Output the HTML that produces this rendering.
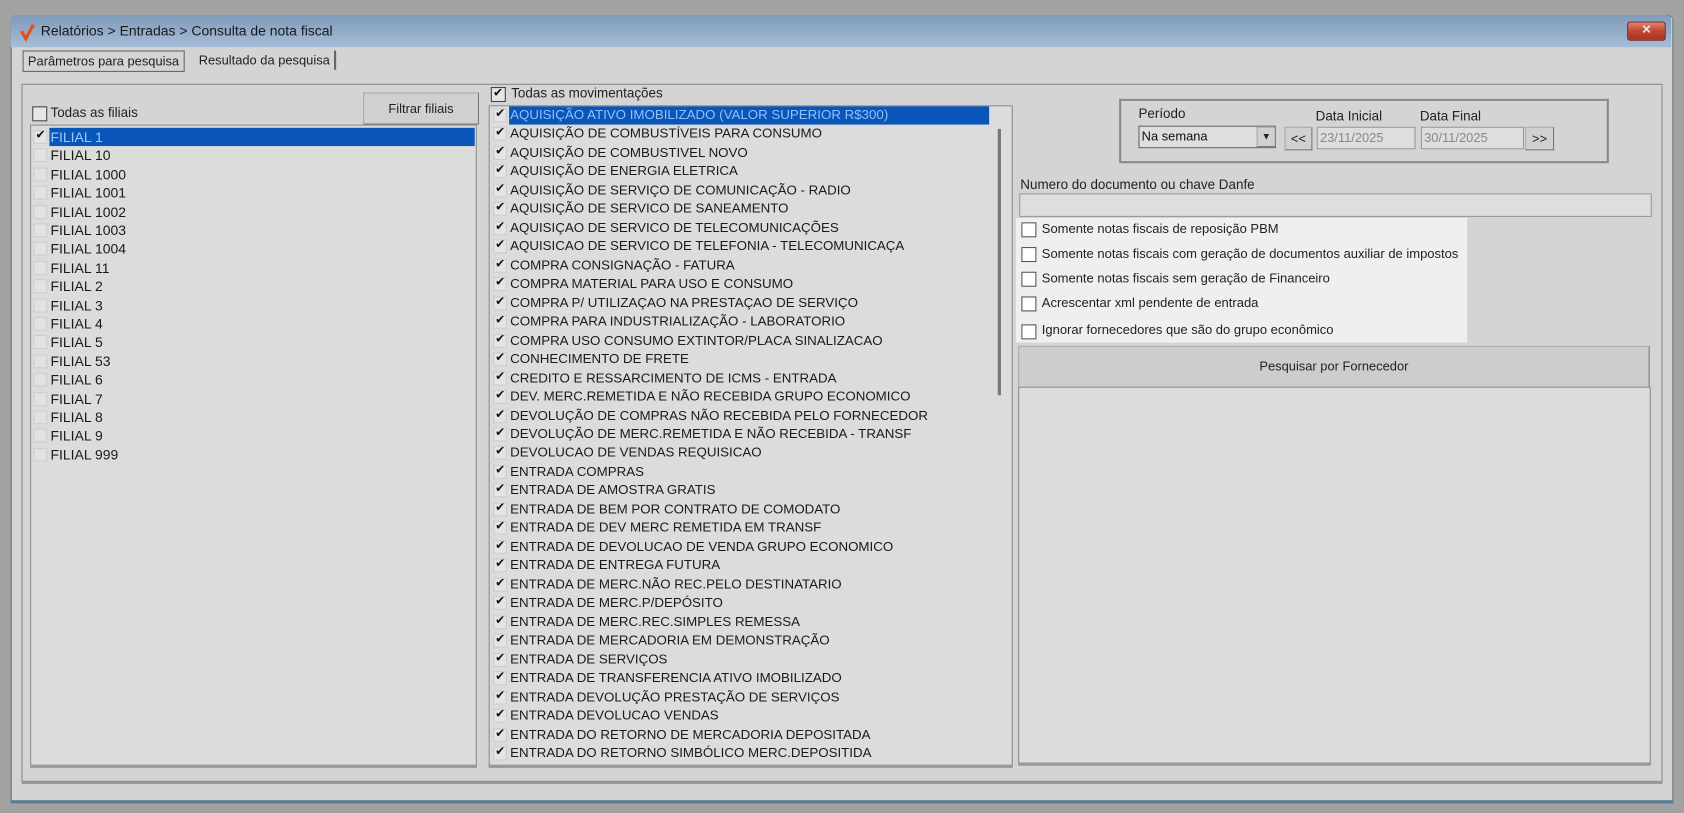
<!DOCTYPE html>
<html><head><meta charset="utf-8"><style>
html,body{margin:0;padding:0;width:1684px;height:813px;overflow:hidden;background:#a2a2a2;}
#s{position:absolute;left:0;top:0;width:1568px;height:757px;transform:scale(1.074,1.074);transform-origin:0 0;font-family:"Liberation Sans",sans-serif;color:#222;}
.a{position:absolute;}
.win{left:10px;top:14px;width:1546px;height:730px;background:#d4d4d4;border:1px solid #6d7f8f;border-radius:5px 5px 0 0;box-shadow:0 2px 0 #4a7f9a;}
.title{left:10px;top:14px;width:1546px;height:30px;background:linear-gradient(#7f9bbb,#a6bdd6);border-radius:5px 5px 0 0;}
.ttl{left:38px;top:21px;font-size:13px;color:#1a1a1a;}
.close{left:1515px;top:20px;width:34px;height:16px;background:linear-gradient(#e08570,#c4452f 50%,#a83220);border:1px solid #7a2a20;border-radius:3px;color:#e8e8e8;font-size:11px;text-align:center;line-height:15px;font-weight:bold;}
.tab{font-size:12px;height:18px;line-height:18px;padding:0 4px;border:1px solid #888;background:#d4d4d4;}
.frame{left:20px;top:78px;width:1526px;height:648px;border:1px solid #8a8a8a;box-shadow:0 2px 0 #999;}
.list{background:#dcdcdc;border:1px solid #8d8d8d;}
.row{position:absolute;font-size:13px;height:17px;line-height:17px;white-space:nowrap;color:#1a1a1a;}
.cb{position:absolute;width:11px;height:11px;border:1px solid #888;background:#e4e4e4;}
.ck{font-size:11px;position:absolute;top:-3px;left:1px;color:#111;}
.sel{background:#0a56b8;color:#8fc0ff;}
.btn{background:#d0d0d0;border:1px solid #aaa;border-right-color:#777;border-bottom-color:#777;font-size:12px;text-align:center;}
.cbx{position:absolute;width:12px;height:12px;border:1px solid #555;background:#fff;}
.opt{position:absolute;font-size:12.1px;}
.inp{background:#dedede;border:1px solid #999;font-size:12px;color:#888;line-height:18px;padding-left:2px;}
</style></head><body><div id="s">
<div class="a win"></div>
<div class="a title"></div>
<svg class="a" style="left:18px;top:21px" width="16" height="18"><path d="M2 8 L6 15 L13 2" stroke="#e5501c" stroke-width="3" fill="none"/></svg>
<div class="a ttl">Relatórios &gt; Entradas &gt; Consulta de nota fiscal</div>
<div class="a close">✕</div>
<div class="a tab" style="left:21px;top:47px;border-color:#666">Parâmetros para pesquisa</div>
<div class="a tab" style="left:181px;top:47px;border:none;border-right:2px solid #666">Resultado da pesquisa</div>
<div class="a frame"></div>

<div class="a cbx" style="left:30px;top:99px;background:#e6e6e6;border-color:#444"></div>
<div class="a" style="left:47px;top:98px;font-size:12.5px">Todas as filiais</div>
<div class="a btn" style="left:338px;top:86px;width:106px;height:28px;line-height:28px">Filtrar filiais</div>
<div class="a list" style="left:28px;top:116px;width:414px;height:595px;box-shadow:0 2px 0 #999"></div>
<div class="a sel" style="left:46px;top:119px;width:396px;height:17px"></div>
<div id="fl"></div>

<div class="a cbx" style="left:457px;top:81px;background:#e6e6e6;border-color:#444"><span class="ck" style="top:-2px">✔</span></div>
<div class="a" style="left:476px;top:80px;font-size:12.5px">Todas as movimentações</div>
<div class="a list" style="left:455px;top:98px;width:486px;height:613px;box-shadow:0 2px 0 #999"></div>
<div class="a" style="left:929px;top:120px;width:3px;height:248px;background:#777"></div>
<div class="a sel" style="left:474px;top:99px;width:447px;height:17px"></div>
<div id="ml"></div>

<div class="a" style="left:1042px;top:92px;width:452px;height:56px;border:2px solid #8a8a8a"></div>
<div class="a" style="left:1060px;top:99px;font-size:12.5px">Período</div>
<div class="a" style="left:1225px;top:101px;font-size:12.5px">Data Inicial</div>
<div class="a" style="left:1322px;top:101px;font-size:12.5px">Data Final</div>
<div class="a inp" style="left:1060px;top:117px;width:124px;height:19px;color:#111;border-color:#666">Na semana</div>
<div class="a btn" style="left:1170px;top:118px;width:16px;height:17px;line-height:17px;font-size:9px">▼</div>
<div class="a btn" style="left:1196px;top:118px;width:24px;height:20px;line-height:20px">&lt;&lt;</div>
<div class="a inp" style="left:1226px;top:118px;width:88px;height:19px">23/11/2025</div>
<div class="a inp" style="left:1323px;top:118px;width:92px;height:19px">30/11/2025</div>
<div class="a btn" style="left:1420px;top:118px;width:25px;height:20px;line-height:20px">&gt;&gt;</div>
<div class="a" style="left:950px;top:165px;font-size:12.5px">Numero do documento ou chave Danfe</div>
<div class="a inp" style="left:949px;top:180px;width:585px;height:20px"></div>
<div class="a" style="left:946px;top:203px;width:420px;height:116px;background:#efefef"></div>
<div class="a cbx" style="left:951px;top:207px"></div><div class="opt" style="left:970px;top:206px">Somente notas fiscais de reposição PBM</div>
<div class="a cbx" style="left:951px;top:230px"></div><div class="opt" style="left:970px;top:229px">Somente notas fiscais com geração de documentos auxiliar de impostos</div>
<div class="a cbx" style="left:951px;top:253px"></div><div class="opt" style="left:970px;top:252px">Somente notas fiscais sem geração de Financeiro</div>
<div class="a cbx" style="left:951px;top:276px"></div><div class="opt" style="left:970px;top:275px">Acrescentar xml pendente de entrada</div>
<div class="a cbx" style="left:951px;top:302px"></div><div class="opt" style="left:970px;top:300px">Ignorar fornecedores que são do grupo econômico</div>
<div class="a btn" style="left:948px;top:322px;width:586px;height:37px;line-height:37px;background:#cdcdcd">Pesquisar por Fornecedor</div>
<div class="a list" style="left:948px;top:360px;width:587px;height:349px;box-shadow:0 2px 0 #999"></div>
</div>
<script>
var f=["FILIAL 1","FILIAL 10","FILIAL 1000","FILIAL 1001","FILIAL 1002","FILIAL 1003","FILIAL 1004","FILIAL 11","FILIAL 2","FILIAL 3","FILIAL 4","FILIAL 5","FILIAL 53","FILIAL 6","FILIAL 7","FILIAL 8","FILIAL 9","FILIAL 999"];
var h="";f.forEach(function(t,i){var y=119+i*17.4;h+='<div class="cb" style="left:31px;top:'+(y+2)+'px;'+(i?'border-color:#ccc;background:#e2e2e2':'border-color:#ccc')+'">'+(i?'':'<span class="ck">✔</span>')+'</div><div class="row" style="left:47px;top:'+y+'px;'+(i?'':'color:#9cc8ff')+'">'+t+'</div>';});
document.getElementById("fl").innerHTML=h;
var m=["AQUISIÇÃO ATIVO IMOBILIZADO (VALOR SUPERIOR R$300)","AQUISIÇÃO DE COMBUSTÍVEIS PARA CONSUMO","AQUISIÇÃO DE COMBUSTIVEL NOVO","AQUISIÇÃO DE ENERGIA ELETRICA","AQUISIÇÃO DE SERVIÇO DE COMUNICAÇÃO - RADIO","AQUISIÇÃO DE SERVICO DE SANEAMENTO","AQUISIÇAO DE SERVICO DE TELECOMUNICAÇÕES","AQUISICAO DE SERVICO DE TELEFONIA - TELECOMUNICAÇA","COMPRA CONSIGNAÇÃO - FATURA","COMPRA MATERIAL PARA USO E CONSUMO","COMPRA P/ UTILIZAÇAO NA PRESTAÇAO DE SERVIÇO","COMPRA PARA INDUSTRIALIZAÇÃO - LABORATORIO","COMPRA USO CONSUMO EXTINTOR/PLACA SINALIZACAO","CONHECIMENTO DE FRETE","CREDITO E RESSARCIMENTO DE ICMS - ENTRADA","DEV. MERC.REMETIDA E NÃO RECEBIDA GRUPO ECONOMICO","DEVOLUÇÃO DE COMPRAS NÃO RECEBIDA PELO FORNECEDOR","DEVOLUÇÃO DE MERC.REMETIDA E NÃO RECEBIDA - TRANSF","DEVOLUCAO DE VENDAS REQUISICAO","ENTRADA COMPRAS","ENTRADA DE AMOSTRA GRATIS","ENTRADA DE BEM POR CONTRATO DE COMODATO","ENTRADA DE DEV MERC REMETIDA EM TRANSF","ENTRADA DE DEVOLUCAO DE VENDA GRUPO ECONOMICO","ENTRADA DE ENTREGA FUTURA","ENTRADA DE MERC.NÃO REC.PELO DESTINATARIO","ENTRADA DE MERC.P/DEPÓSITO","ENTRADA DE MERC.REC.SIMPLES REMESSA","ENTRADA DE MERCADORIA EM DEMONSTRAÇÃO","ENTRADA DE SERVIÇOS","ENTRADA DE TRANSFERENCIA ATIVO IMOBILIZADO","ENTRADA DEVOLUÇÃO PRESTAÇÃO DE SERVIÇOS","ENTRADA DEVOLUCAO VENDAS","ENTRADA DO RETORNO DE MERCADORIA DEPOSITADA","ENTRADA DO RETORNO SIMBÓLICO MERC.DEPOSITIDA"];
h="";m.forEach(function(t,i){var y=99+i*17.47;h+='<div class="cb" style="left:459px;top:'+(y+2)+'px;border-color:#ccc"><span class="ck">✔</span></div><div class="row" style="left:475px;top:'+y+'px;font-size:12.4px;'+(i?'':'color:#8fc0ff')+'">'+t+'</div>';});
document.getElementById("ml").innerHTML=h;
</script>
</body></html>
